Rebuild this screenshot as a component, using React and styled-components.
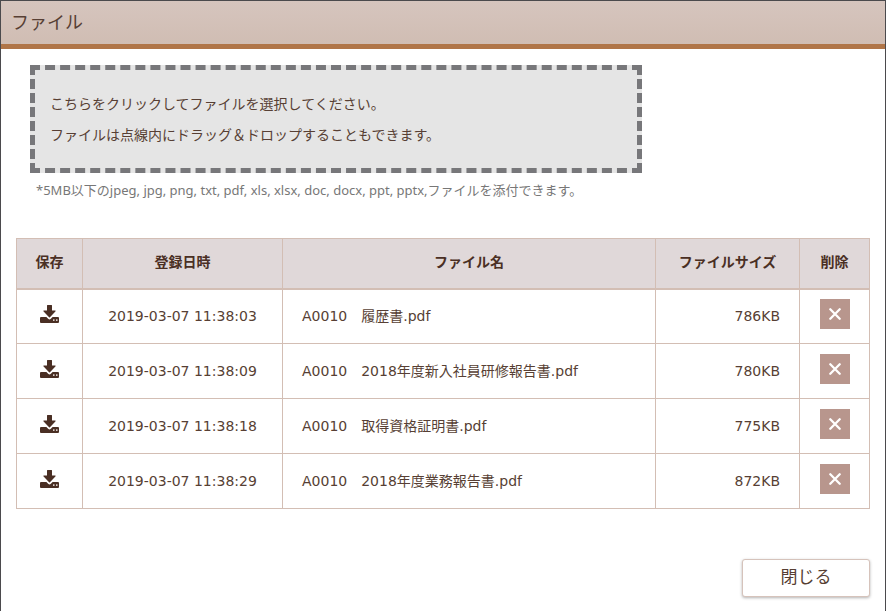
import React, { useState } from "react";
import styled, { createGlobalStyle } from "styled-components";

const GlobalStyle = createGlobalStyle`
  * {
    box-sizing: border-box;
  }
  body {
    margin: 0;
    background: #4b4a4d;
    color: #573f34;
    font-family: "DejaVu Sans", "Noto Sans CJK JP", sans-serif;
    font-size: 14px;
  }
  button {
    font-family: inherit;
    color: inherit;
    cursor: pointer;
  }
`;

const Modal = styled.main`
  min-height: 100vh;
  border: 1px solid #4b4a4d;
  border-bottom: 0;
  background: #fff;
`;

const ModalHeader = styled.header`
  display: flex;
  align-items: center;
  height: 48px;
  padding: 0 10px;
  border-bottom: 5px solid #b07548;
  background: linear-gradient(#d6c5be, #d0bdb3);
`;

const Title = styled.h1`
  margin: 0;
  font-size: 18px;
  font-weight: 400;
  line-height: 24px;
`;

const ModalBody = styled.div`
  padding: 16px 15px;
`;

const Upload = styled.section`
  max-width: 626px;
  margin-bottom: 39px;
  padding-left: 14px;
`;

const DropArea = styled.label`
  display: block;
  padding: 19px 15px 17px;
  border: 5px dashed #77777a;
  background: #e5e5e5;
  line-height: 31px;
  cursor: pointer;
`;

const FileInput = styled.input`
  display: none;
`;

const DropLine = styled.span`
  display: block;
`;

const Hint = styled.p`
  margin: 8px 0 0;
  padding-left: 6px;
  color: #777;
  font-family: "Noto Sans", "Noto Sans CJK JP", sans-serif;
  font-size: 13px;
  line-height: 18px;
  white-space: nowrap;
`;

const FileTable = styled.table`
  width: 100%;
  table-layout: fixed;
  border-collapse: collapse;
  line-height: 20px;
`;

const HeadCell = styled.th`
  width: ${({ $width }) => $width || "auto"};
  height: 50px;
  padding: 0 0 2px;
  border: 1px solid #d3beb4;
  border-bottom-width: 2px;
  background: #e0d8d9;
  color: #4a2f24;
  font-weight: 700;
`;

const Cell = styled.td`
  height: 55px;
  padding: 0 19px;
  border: 1px solid #d3beb4;
  text-align: ${({ $align }) => $align || "left"};
`;

const ActionCell = styled(Cell)`
  padding: 0 0 5px;
  text-align: center;
`;

const IconButton = styled.button`
  display: flex;
  align-items: center;
  justify-content: center;
  width: 30px;
  height: 30px;
  margin: 0 auto;
  padding: 0;
  border: 0;
  background: ${({ $filled }) => ($filled ? "#b8968d" : "transparent")};
`;

const ModalFooter = styled.footer`
  display: flex;
  justify-content: flex-end;
  padding-top: 50px;
`;

const CloseButton = styled.button`
  width: 128px;
  height: 38px;
  padding: 0 0 6px;
  border: 1px solid #d6c3bb;
  border-radius: 3px;
  background: #fff;
  box-shadow: 0 1px 3px rgba(0, 0, 0, 0.3);
  font-size: 17px;
`;

const DownloadIcon = () => (
  <svg width="19" height="18" viewBox="0 0 19 18" aria-hidden="true">
    <path
      fill="#4a2f24"
      d="M7.5 0h4a.5.5 0 0 1 .5.5V5.5h3c.6 0 .8.6.4 1L9.9 12.2a.6.6 0 0 1-.8 0L3.6 6.5c-.4-.4-.2-1 .4-1h3V.5a.5.5 0 0 1 .5-.5z"
    />
    <path
      fill="#4a2f24"
      d="M1 12h5.4l2 2.1c.6.6 1.6.6 2.2 0l2-2.1H18a1 1 0 0 1 1 1v4a1 1 0 0 1-1 1H1a1 1 0 0 1-1-1v-4a1 1 0 0 1 1-1z"
    />
    <path fill="#d8cdc8" d="M13 14.3h1.5v1.6H13zM16 14.3h1.5v1.6H16z" />
  </svg>
);

const CrossIcon = () => (
  <svg width="12" height="12" viewBox="0 0 12 12" aria-hidden="true">
    <path
      d="M1.3 1.3l9.4 9.4M10.7 1.3l-9.4 9.4"
      stroke="#fff"
      strokeWidth="2.3"
      strokeLinecap="round"
    />
  </svg>
);

const initialFiles = [
  { date: "2019-03-07 11:38:03", name: "A0010　履歴書.pdf", size: "786KB" },
  { date: "2019-03-07 11:38:09", name: "A0010　2018年度新入社員研修報告書.pdf", size: "780KB" },
  { date: "2019-03-07 11:38:18", name: "A0010　取得資格証明書.pdf", size: "775KB" },
  { date: "2019-03-07 11:38:29", name: "A0010　2018年度業務報告書.pdf", size: "872KB" },
];

const App = () => {
  const [files, setFiles] = useState(initialFiles);

  const handleDelete = (date) => setFiles(files.filter((file) => file.date !== date));

  return (
    <>
      <GlobalStyle />
      <Modal lang="ja">
        <ModalHeader>
          <Title>ファイル</Title>
        </ModalHeader>
        <ModalBody>
          <Upload>
            <DropArea htmlFor="attachment">
              <DropLine>こちらをクリックしてファイルを選択してください。</DropLine>
              <DropLine>ファイルは点線内にドラッグ＆ドロップすることもできます。</DropLine>
            </DropArea>
            <FileInput id="attachment" type="file" multiple />
            <Hint>
              *5MB以下のjpeg, jpg, png, txt, pdf, xls, xlsx, doc, docx, ppt, pptx,ファイルを添付できます。
            </Hint>
          </Upload>
          <FileTable>
            <thead>
              <tr>
                <HeadCell $width="66px">保存</HeadCell>
                <HeadCell $width="200px">登録日時</HeadCell>
                <HeadCell>ファイル名</HeadCell>
                <HeadCell $width="144px">ファイルサイズ</HeadCell>
                <HeadCell $width="70px">削除</HeadCell>
              </tr>
            </thead>
            <tbody>
              {files.map((file) => (
                <tr key={file.date}>
                  <ActionCell>
                    <IconButton type="button" aria-label="保存">
                      <DownloadIcon />
                    </IconButton>
                  </ActionCell>
                  <Cell $align="center">{file.date}</Cell>
                  <Cell>{file.name}</Cell>
                  <Cell $align="right">{file.size}</Cell>
                  <ActionCell>
                    <IconButton
                      type="button"
                      aria-label="削除"
                      $filled
                      onClick={() => handleDelete(file.date)}
                    >
                      <CrossIcon />
                    </IconButton>
                  </ActionCell>
                </tr>
              ))}
            </tbody>
          </FileTable>
          <ModalFooter>
            <CloseButton type="button">閉じる</CloseButton>
          </ModalFooter>
        </ModalBody>
      </Modal>
    </>
  );
};

export default App;
